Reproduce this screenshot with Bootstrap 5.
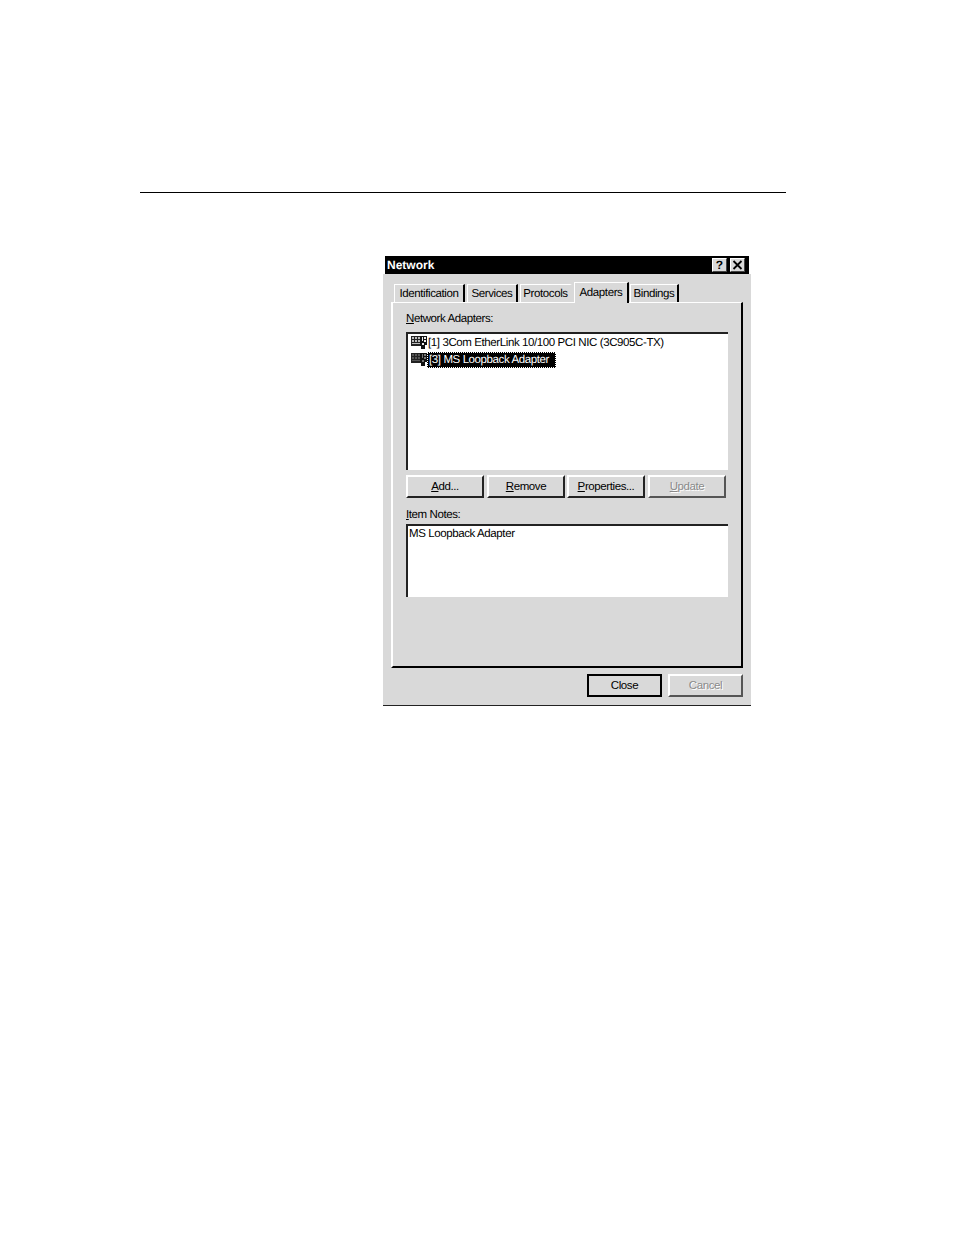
<!DOCTYPE html>
<html lang="en">
<head>
<meta charset="utf-8">
<title>Network</title>
<link href="https://cdn.jsdelivr.net/npm/bootstrap@5.3.0/dist/css/bootstrap.min.css" rel="stylesheet">
<style>
html,body{background:#fff;margin:0}
body{font-family:"Liberation Sans",Arial,sans-serif;font-size:11.5px;letter-spacing:-.4px;line-height:14px;color:#000;height:1235px;overflow:hidden;text-rendering:geometricPrecision}
.page-rule{height:1px;background:#000;margin:192px 168px 0 140px}
.win{width:368px;height:450px;margin:63px 0 0 383px;background:#fff;position:relative}
.win-title{height:18px;margin:0 2px;background:#000;color:#fff;font-weight:700;padding:0 4px 0 2px;font-size:12px;letter-spacing:0;line-height:18px}
.cap-btn{width:15px;height:14px;background:#d9d9d9;border:1px solid;border-color:#fff #444 #444 #fff;display:flex;align-items:center;justify-content:center;font-weight:700;font-size:12px;line-height:12px;color:#000}
.cap-row{gap:3px}
.win-body{height:432px;background:#d9d9d9;padding:0 2px;border-bottom:1px solid #222}
.tabrow{height:28px;padding:8px 0 0 9px;gap:2px;align-items:flex-end}
.tabitem{height:18px;background:#d9d9d9;border:solid;border-width:1px 2px 0 1px;border-color:#fff #000 #fff #fff;text-align:center;line-height:18px;white-space:nowrap;overflow:hidden}
.tabitem.on{height:21px;line-height:21px;margin:0 -1px 0 0;position:relative;z-index:2;top:1px}
.tabitem.cut{border-right-color:#d9d9d9}
.panel{width:352px;height:366px;margin-left:6px;border:solid;border-width:1px 2px 2px 2px;border-color:#fff #000 #000 #fff;padding:8px 13px 0 13px;background:#d9d9d9}
.lbl{height:21px;padding-top:1px;line-height:14px;white-space:nowrap}
.lbl-b{height:17px}
.boxx{width:322px;background:#fff;border:solid;border-width:2px 0 0 2px;border-color:#222}
.box-a{height:138px;padding:0 0 0 2px}
.box-b{height:73px;padding:0 0 0 1px;line-height:17px}
.rowitem{height:17px;display:flex;align-items:center;gap:0;white-space:nowrap}
.sel{background:#000;color:#fff;outline:1px dotted #fff;outline-offset:-1px;height:16px;line-height:17px;padding:0 7px 0 2px}
.plain{padding:0 1px}
.wbtn.btn{--bs-btn-padding-x:0;--bs-btn-padding-y:0;--bs-btn-font-size:11.5px;--bs-btn-line-height:19px;--bs-btn-border-radius:0;--bs-btn-border-width:0;--bs-btn-color:#000;--bs-btn-bg:#d9d9d9;--bs-btn-hover-bg:#d9d9d9;--bs-btn-hover-color:#000;--bs-btn-disabled-opacity:1;--bs-btn-disabled-bg:#d9d9d9;--bs-btn-disabled-color:#8a8a8a;letter-spacing:-.4px;width:78px;height:23px;border:solid;border-width:2px;border-color:#fff #222 #222 #fff}
.wbtn.btn:disabled{border-color:#fff #555 #555 #fff;text-shadow:1px 1px 0 #fff}
.wbtn.def.btn{border-color:#000;width:75px}
.wbtn.can.btn{width:75px}
.wbtn.tuck.btn{margin-left:-1px}
.btnrow{gap:3px;margin:5px 0 9px}
.footrow{gap:6px;justify-content:flex-end;margin:6px 6px 0 0}
</style>
</head>
<body>
<div class="page-rule"></div>
<div class="win">
  <div class="win-title d-flex align-items-center justify-content-between">
    <span>Network</span>
    <span class="d-flex cap-row"><span class="cap-btn">?</span><span class="cap-btn"><svg width="11" height="10" viewBox="0 0 11 10"><path d="M1.5 1 L9.5 9 M9.5 1 L1.5 9" stroke="#000" stroke-width="1.8" fill="none"/></svg></span></span>
  </div>
  <div class="win-body">
  <div class="tabrow d-flex">
    <div class="tabitem" style="width:71px">Identification</div>
    <div class="tabitem" style="width:51px">Services</div>
    <div class="tabitem cut" style="width:52px">Protocols</div>
    <div class="tabitem on" style="width:55px">Adapters</div>
    <div class="tabitem" style="width:49px">Bindings</div>
  </div>
  <div class="panel">
    <div class="lbl"><u>N</u>etwork Adapters:</div>
    <div class="boxx box-a">
      <div class="rowitem">
        <svg width="17" height="15" viewBox="0 0 17 15"><path d="M1 1h10v10H1z" fill="#222"/><path d="M2 2h2v2H2zM5 2h2v2H5zM8 2h2v2H8zM2 5h2v2H2zM5 5h2v2H5zM8 5h2v2H8zM2 8h8v1H2z" fill="#bbb"/><path d="M10 1h7v9h-2v4h-4v-3h-1z" fill="#111"/><path d="M12 2h1v4h-1zM14 2h2v2h-2zM14 5h2v2h-2zM12 8h2v2h-2z" fill="#eee"/></svg>
        <span class="plain">[1] 3Com EtherLink 10/100 PCI NIC (3C905C-TX)</span>
      </div>
      <div class="rowitem">
        <svg width="17" height="15" viewBox="0 0 17 15"><path d="M1 1h10v10H1z" fill="#222"/><path d="M2 2h2v2H2zM5 2h2v2H5zM8 2h2v2H8zM2 5h2v2H2zM5 5h2v2H5zM8 5h2v2H8zM2 8h8v1H2z" fill="#555"/><path d="M10 1h7v9h-2v4h-4v-3h-1z" fill="#111"/><path d="M12 2h1v4h-1zM14 2h2v2h-2zM14 5h2v2h-2zM12 8h2v2h-2z" fill="#777"/></svg>
        <span class="sel">[3] MS Loopback Adapter</span>
      </div>
    </div>
    <div class="btnrow d-flex">
      <button class="btn wbtn" type="button"><u>A</u>dd...</button>
      <button class="btn wbtn" type="button"><u>R</u>emove</button>
      <button class="btn wbtn tuck" type="button"><u>P</u>roperties...</button>
      <button class="btn wbtn" type="button" disabled><u>U</u>pdate</button>
    </div>
    <div class="lbl lbl-b"><u>I</u>tem Notes:</div>
    <div class="boxx box-b">MS Loopback Adapter</div>
  </div>
  <div class="footrow d-flex">
    <button class="btn wbtn def" type="button">Close</button>
    <button class="btn wbtn can" type="button" disabled>Cancel</button>
  </div>
  </div>
</div>
<script src="https://cdn.jsdelivr.net/npm/bootstrap@5.3.0/dist/js/bootstrap.bundle.min.js"></script>
</body>
</html>
